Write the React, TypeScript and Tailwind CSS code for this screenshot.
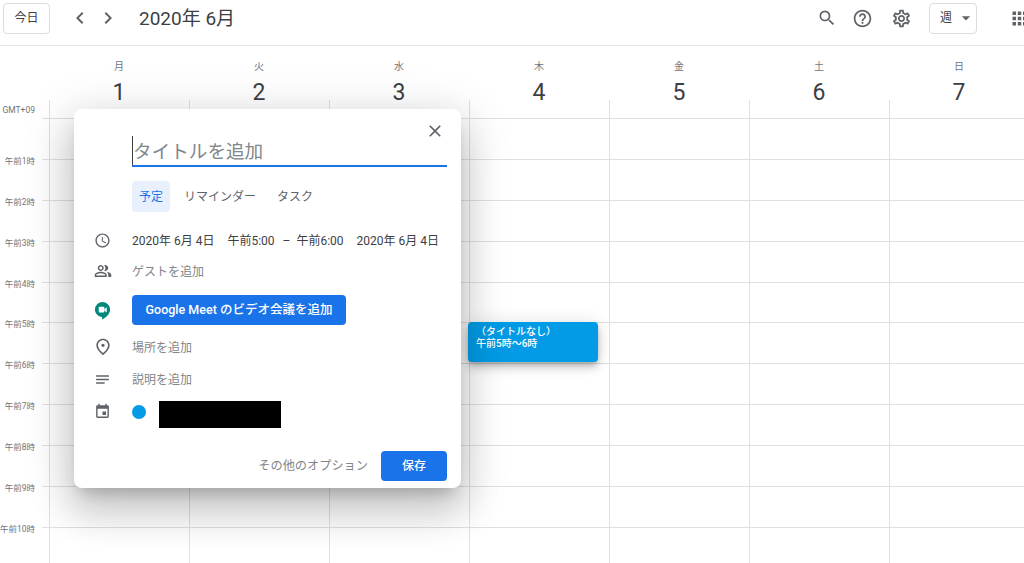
import {
  MdAccessTime,
  MdApps,
  MdArrowDropDown,
  MdChevronLeft,
  MdChevronRight,
  MdClose,
  MdEvent,
  MdNotes,
  MdOutlineHelpOutline,
  MdOutlinePeopleAlt,
  MdOutlinePlace,
  MdOutlineSettings,
  MdSearch,
} from "react-icons/md";

const days = [
  { label: "月", date: 1 },
  { label: "火", date: 2 },
  { label: "水", date: 3 },
  { label: "木", date: 4 },
  { label: "金", date: 5 },
  { label: "土", date: 6 },
  { label: "日", date: 7 },
];

const hours = ["", "午前1時", "午前2時", "午前3時", "午前4時", "午前5時", "午前6時", "午前7時", "午前8時", "午前9時", "午前10時"];

function MeetIcon() {
  return (
    <svg width="17" height="19" viewBox="0 0 18 20">
      <path d="M9 1a8 8 0 0 0-8 8c0 4.200 3.400 7.600 7.500 7.900V19.500c4.200-2 8.500-5.700 8.500-10.500a8 8 0 0 0-8-8z" fill="#00897b" />
      <rect x="5" y="6" width="6" height="6" rx="1" fill="#fff" />
      <path d="M11 8.500l2.500-2v5.500l-2.500-2z" fill="#fff" />
    </svg>
  );
}

function Header() {
  return (
    <header className="flex h-[46px] items-center border-b border-[#e3e4e6] pb-[9px] text-[#3c4043]">
      <button className="ml-[3px] flex h-[31px] w-[47px] items-center justify-center rounded border border-[#dadce0] text-[12px] text-[#3c4043]">
        今日
      </button>
      <MdChevronLeft className="ml-[18px] text-[#5f6368]" size={24} />
      <MdChevronRight className="ml-[4px] text-[#5f6368]" size={24} />
      <h1 className="ml-[19px] text-[19px] leading-none whitespace-nowrap">2020年 6月</h1>
      <div className="ml-auto flex items-center">
        <MdSearch className="text-[#5f6368]" size={20} />
        <MdOutlineHelpOutline className="ml-[15px] text-[#5f6368]" size={21} />
        <MdOutlineSettings className="ml-[18px] text-[#5f6368]" size={21} />
        <button className="ml-[17px] flex h-[31px] w-[48px] items-center rounded border border-[#dadce0] pl-[10px] text-[12px]">
          週
          <MdArrowDropDown className="ml-[4px] text-[#5f6368]" size={20} />
        </button>
        <MdApps className="mr-[-6px] ml-[32px] text-[#5f6368]" size={21} />
      </div>
    </header>
  );
}

function DayHeader() {
  return (
    <div>
      <div className="flex h-[54px] pl-[49px]">
        {days.map((d) => (
          <div key={d.date} className="flex w-[140px] shrink-0 flex-col items-center">
            <span className="mt-[14px] text-[10px] leading-[14px] text-[#70757a]">{d.label}</span>
            <span className="mt-[9px] h-[20px] text-[23px] leading-[20px] text-[#3c4043]">{d.date}</span>
          </div>
        ))}
      </div>
      <div className="flex h-[18px]">
        <span className="w-[35px] shrink-0 text-right text-[8.5px] leading-[20px] whitespace-nowrap text-[#70757a]">GMT+09</span>
        <span className="w-[14px] shrink-0" />
        {days.map((d) => (
          <span key={d.date} className="w-[140px] shrink-0 border-l border-[#e0e0e0]" />
        ))}
      </div>
    </div>
  );
}

function TimeGrid() {
  return (
    <div>
      {hours.map((h, i) => (
        <div key={i} className="flex h-[40.9px]">
          <span className="mt-[-6px] w-[35px] shrink-0 text-right text-[8.5px] leading-[16px] whitespace-nowrap text-[#70757a]">
            {h}
          </span>
          <span className="ml-[7px] w-[7px] shrink-0 border-t border-[#e0e0e0]" />
          {days.map((d) => (
            <div key={d.date} className="w-[140px] shrink-0 border-t border-l border-[#e0e0e0]" />
          ))}
        </div>
      ))}
    </div>
  );
}

function FormRow({ icon, children, className }: { icon: React.ReactNode; children: React.ReactNode; className: string }) {
  return (
    <div className={`flex items-center ${className}`}>
      <span className="flex w-[58px] shrink-0 justify-center pr-[1px] text-[#5f6368]">{icon}</span>
      {children}
    </div>
  );
}

function QuickAddDialog() {
  return (
    <div className="absolute top-[109px] left-[74px] flex h-[379px] w-[387px] flex-col rounded-lg bg-white shadow-[0_24px_38px_3px_rgba(0,0,0,0.14),0_9px_46px_8px_rgba(0,0,0,0.12),0_11px_15px_-7px_rgba(0,0,0,0.2)]">
      <div className="flex justify-end pt-[12px] pr-[16px]">
        <MdClose className="text-[#5f6368]" size={20} />
      </div>
      <div className="mt-[-5px] ml-[58px] h-[31px] w-[315px] border-b-2 border-[#1a73e8]">
        <div className="h-[29px] border-l border-[#3c4043] text-[18.6px] leading-[32px] whitespace-nowrap text-[#80868b]">
          タイトルを追加
        </div>
      </div>
      <div className="mt-[14px] ml-[58px] flex items-center text-[12px] text-[#5f6368]">
        <span className="flex h-[31px] w-[38px] items-center justify-center rounded bg-[#e8f0fe] text-[#1a73e8]">予定</span>
        <span className="ml-[14px]">リマインダー</span>
        <span className="ml-[21px]">タスク</span>
      </div>
      <FormRow icon={<MdAccessTime size={17} />} className="mt-[18px] h-[20px] text-[12px] text-[#3c4043]">
        <div className="flex pt-[2px]">
          <span>2020年 6月 4日</span>
          <span className="ml-[13px]">午前5:00</span>
          <span className="ml-[8px]">–</span>
          <span className="ml-[6px]">午前6:00</span>
          <span className="ml-[13px]">2020年 6月 4日</span>
        </div>
      </FormRow>
      <FormRow icon={<MdOutlinePeopleAlt size={18} />} className="mt-[11px] h-[20px] text-[12px] text-[#80868b]">
        <span className="pt-[2px]">ゲストを追加</span>
      </FormRow>
      <FormRow icon={<MeetIcon />} className="mt-[14px] h-[30px]">
        <span className="flex h-[30px] w-[214px] items-center justify-center rounded bg-[#1a73e8] text-[12.5px] font-medium whitespace-nowrap text-white">
          Google Meet のビデオ会議を追加
        </span>
      </FormRow>
      <FormRow icon={<MdOutlinePlace size={20} />} className="mt-[12px] h-[20px] text-[12px] text-[#80868b]">
        <span className="pt-[2px]">場所を追加</span>
      </FormRow>
      <FormRow icon={<MdNotes size={17} />} className="mt-[12px] h-[20px] text-[12px] text-[#80868b]">
        <span className="pt-[2px]">説明を追加</span>
      </FormRow>
      <FormRow icon={<MdEvent className="mb-[6px]" size={17} />} className="mt-[12px] h-[27px]">
        <span className="mb-[6px] h-[14px] w-[14px] rounded-full bg-[#039be5]" />
        <span className="ml-[13px] h-[27px] w-[122px] bg-black" />
      </FormRow>
      <div className="mt-[23px] flex items-center justify-end pr-[14px] text-[12px]">
        <span className="text-[12.2px] text-[#80868b]">その他のオプション</span>
        <span className="ml-[13px] flex h-[30px] w-[66px] items-center justify-center rounded bg-[#1a73e8] font-medium text-white">保存</span>
      </div>
    </div>
  );
}

export default function App() {
  return (
    <div
      className="relative h-[563px] w-[1024px] overflow-hidden bg-white"
      style={{ fontFamily: 'Roboto, "Noto Sans CJK JP", sans-serif' }}
    >
      <Header />
      <DayHeader />
      <TimeGrid />
      <div className="absolute top-[322px] left-[468px] h-[40px] w-[130px] rounded bg-[#039be5] px-[8px] pt-[4px] text-[10px] leading-[12px] font-medium text-white shadow-[0_6px_10px_0_rgba(0,0,0,0.14),0_1px_18px_0_rgba(0,0,0,0.12),0_3px_5px_-1px_rgba(0,0,0,0.2)]">
        <div>（タイトルなし）</div>
        <div>午前5時～6時</div>
      </div>
      <QuickAddDialog />
    </div>
  );
}
